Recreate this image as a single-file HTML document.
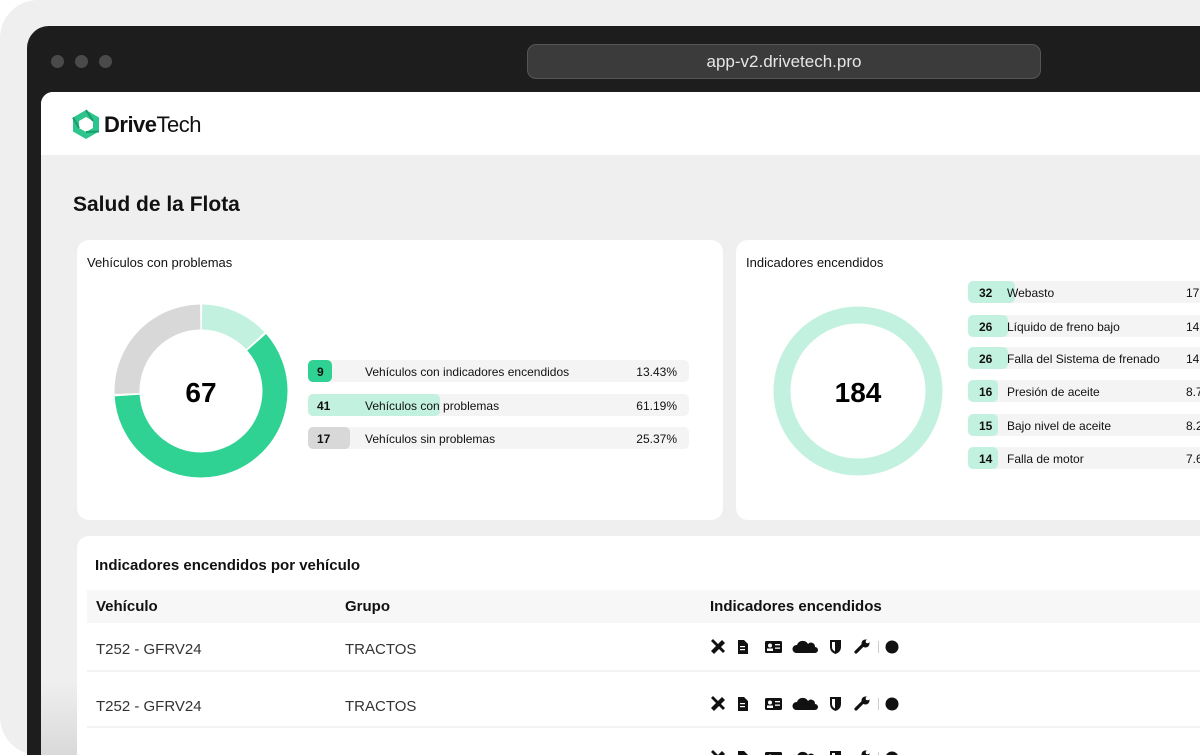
<!DOCTYPE html>
<html><head><meta charset="utf-8"><style>
*{margin:0;padding:0;box-sizing:border-box}
html,body{width:1200px;height:755px;overflow:hidden}
body{background:#fff;font-family:"Liberation Sans",sans-serif;color:#111;position:relative}
.outer{position:absolute;left:0;top:0;width:1200px;height:755px;background:#efefef;border-radius:38px 0 0 38px}
.frame{position:absolute;left:27px;top:26px;width:1173px;height:729px;background:#1d1d1d;border-radius:22px 0 0 0}
.dot{position:absolute;top:55px;width:13px;height:13px;border-radius:50%;background:#4a4a4a}
.url{position:absolute;left:527px;top:44px;width:514px;height:35px;border-radius:9px;background:#3b3b3b;border:1px solid #555;color:#e6e6e6;font-size:17px;text-align:center;line-height:34px}
.page{position:absolute;left:41px;top:92px;width:1159px;height:663px;background:#efefef;border-radius:12px 0 0 0;overflow:hidden}
.hdr{position:absolute;left:0;top:0;width:100%;height:63px;background:#fff}
.card{position:absolute;background:#fff;border-radius:12px}
.t{position:absolute;white-space:nowrap}
.row{position:absolute;height:22px;background:#f4f4f4;border-radius:5px;font-size:12px}
.row .b{position:absolute;left:0;top:0;height:22px;border-radius:5px}
.row .n{position:absolute;top:5px;font-weight:bold;font-size:12px}
.row .l{position:absolute;top:5px}
.row .p{position:absolute;top:5px;right:12px}
.th{position:absolute;font-weight:bold;font-size:15px}
.td{position:absolute;font-size:15px;color:#333}
.sep{position:absolute;left:10px;right:0;height:2px;background:#f3f3f3}
</style></head><body>
<div class="outer"></div>
<div class="frame"></div>
<div class="dot" style="left:51px"></div><div class="dot" style="left:75px"></div><div class="dot" style="left:99px"></div>
<div class="url">app-v2.drivetech.pro</div>
<div class="page">
 <div class="hdr">
  <svg style="position:absolute;left:30px;top:17px" width="30" height="31" viewBox="0 0 30 31"><polygon points="15,1 28,8.5 28,22.5 15,30 2,22.5 2,8.5" fill="#2cc58d"/><polygon points="15,8 22,12 22,19 15,23 8,19 8,12" fill="#fff"/><path d="M15 1 L22 12 M28 22.5 L15 23 M2 8.5 L8 19" stroke="#1a9c6e" stroke-width="2"/></svg>
  <div class="t" style="left:63px;top:20px;font-size:22px;letter-spacing:-0.5px"><b>Drive</b>Tech</div>
 </div>
 <div class="t" style="left:32px;top:101px;font-size:21px;font-weight:bold">Salud de la Flota</div>

 <div class="card" style="left:36px;top:148px;width:646px;height:280px">
  <div class="t" style="left:10px;top:15px;font-size:13px">Vehículos con problemas</div>
  <svg style="position:absolute;left:37px;top:64px" width="174" height="174" viewBox="0 0 174 174">
   <g transform="rotate(-90 87 87)" fill="none" stroke-width="25">
    <circle cx="87" cy="87" r="74" stroke="#c3f1df" stroke-dasharray="60 465" stroke-dashoffset="-1"/>
    <circle cx="87" cy="87" r="74" stroke="#2fd292" stroke-dasharray="281 465" stroke-dashoffset="-63"/>
    <circle cx="87" cy="87" r="74" stroke="#d8d8d8" stroke-dasharray="118 465" stroke-dashoffset="-346"/>
   </g>
   <text x="87" y="98" text-anchor="middle" font-family="Liberation Sans" font-weight="bold" font-size="28">67</text>
  </svg>
  <div class="row" style="left:231px;top:120px;width:381px"><div class="b" style="width:24px;background:#2fd292"></div><span class="n" style="left:9px">9</span><span class="l" style="left:57px">Vehículos con indicadores encendidos</span><span class="p">13.43%</span></div>
  <div class="row" style="left:231px;top:154px;width:381px"><div class="b" style="width:132px;background:#c3f1df"></div><span class="n" style="left:9px">41</span><span class="l" style="left:57px">Vehículos con problemas</span><span class="p">61.19%</span></div>
  <div class="row" style="left:231px;top:187px;width:381px"><div class="b" style="width:42px;background:#d8d8d8"></div><span class="n" style="left:9px">17</span><span class="l" style="left:57px">Vehículos sin problemas</span><span class="p">25.37%</span></div>
 </div>

 <div class="card" style="left:695px;top:148px;width:600px;height:280px">
  <div class="t" style="left:10px;top:15px;font-size:13px">Indicadores encendidos</div>
  <svg style="position:absolute;left:37px;top:66px" width="170" height="170" viewBox="0 0 170 170">
   <circle cx="85" cy="85" r="76" fill="none" stroke="#c3f1df" stroke-width="17"/>
   <text x="85" y="96" text-anchor="middle" font-family="Liberation Sans" font-weight="bold" font-size="28">184</text>
  </svg>
  <div class="row" style="left:232px;top:41px;width:300px"><div class="b" style="width:47px;background:#c3f1df"></div><span class="n" style="left:11px">32</span><span class="l" style="left:39px">Webasto</span><span class="p" style="left:218px">17.3</span></div>
  <div class="row" style="left:232px;top:75px;width:300px"><div class="b" style="width:40px;background:#c3f1df"></div><span class="n" style="left:11px">26</span><span class="l" style="left:39px">Líquido de freno bajo</span><span class="p" style="left:218px">14.1</span></div>
  <div class="row" style="left:232px;top:107px;width:300px"><div class="b" style="width:40px;background:#c3f1df"></div><span class="n" style="left:11px">26</span><span class="l" style="left:39px">Falla del Sistema de frenado</span><span class="p" style="left:218px">14.1</span></div>
  <div class="row" style="left:232px;top:140px;width:300px"><div class="b" style="width:30px;background:#c3f1df"></div><span class="n" style="left:11px">16</span><span class="l" style="left:39px">Presión de aceite</span><span class="p" style="left:218px">8.7</span></div>
  <div class="row" style="left:232px;top:174px;width:300px"><div class="b" style="width:30px;background:#c3f1df"></div><span class="n" style="left:11px">15</span><span class="l" style="left:39px">Bajo nivel de aceite</span><span class="p" style="left:218px">8.2</span></div>
  <div class="row" style="left:232px;top:207px;width:300px"><div class="b" style="width:30px;background:#c3f1df"></div><span class="n" style="left:11px">14</span><span class="l" style="left:39px">Falla de motor</span><span class="p" style="left:218px">7.6</span></div>
 </div>

 <div class="card" style="left:36px;top:444px;width:1140px;height:219px;border-radius:12px 0 0 0">
  <div class="t" style="left:18px;top:21px;font-size:15px;font-weight:bold">Indicadores encendidos por vehículo</div>
  <div style="position:absolute;left:10px;top:54px;right:0;height:33px;background:#f7f7f7"></div>
  <div class="th" style="left:19px;top:62px">Vehículo</div>
  <div class="th" style="left:268px;top:62px">Grupo</div>
  <div class="th" style="left:633px;top:62px">Indicadores encendidos</div>
  <div class="td" style="left:19px;top:105px">T252 - GFRV24</div><div class="td" style="left:268px;top:105px">TRACTOS</div>
  <div class="sep" style="top:134px"></div>
  <div class="td" style="left:19px;top:162px">T252 - GFRV24</div><div class="td" style="left:268px;top:162px">TRACTOS</div>
  <div class="sep" style="top:190px"></div>
 </div>
 <div style="position:absolute;left:0;top:590px;width:36px;height:73px;background:linear-gradient(#efefef,#d9d9d9)"></div>
</div>
<svg style="position:absolute;left:710px;top:638px" width="200" height="117">
 <defs><g id="ic" fill="#111">
  <path d="M1 2 L3 0 L15 12 L13 14 Z"/><path d="M12 1 L15 4 L4 15 L1 12 Z"/>
  <path d="M28 1 h6 l4 4 v10 h-10 Z"/><rect x="30" y="7" width="5" height="1.2" fill="#fff"/><rect x="30" y="10" width="5" height="1.2" fill="#fff"/>
  <rect x="55" y="2" width="17" height="12" rx="1.5"/><circle cx="60" cy="6.5" r="2" fill="#fff"/><rect x="57" y="9.5" width="6" height="2.5" fill="#fff"/><rect x="65" y="5" width="5" height="1.3" fill="#fff"/><rect x="65" y="8.5" width="5" height="1.3" fill="#fff"/>
  <path d="M86 14 a4 4 0 0 1 1-8 a6 6 0 0 1 11-1 a4 4 0 0 1 7 3 a3 3 0 0 1 0 6 Z"/>
  <path d="M120 1 h11 v7 q0 5-5.5 7 q-5.5-2-5.5-7 Z"/><path d="M122 3 h3 v9.5 q-3-1.5-3-4.5 Z" fill="#fff"/>
  <path d="M146 13 l7-7" stroke="#111" stroke-width="3.2" stroke-linecap="round"/><circle cx="155.5" cy="4.5" r="4"/><circle cx="157.5" cy="2.5" r="1.8" fill="#fff"/>
  <rect x="168" y="2" width="1" height="12" fill="#ccc"/><circle cx="182" cy="8" r="6.5"/>
 </g></defs>
 <use href="#ic" y="1"/><use href="#ic" y="58"/><use href="#ic" y="112"/>
</svg>
</body></html>
